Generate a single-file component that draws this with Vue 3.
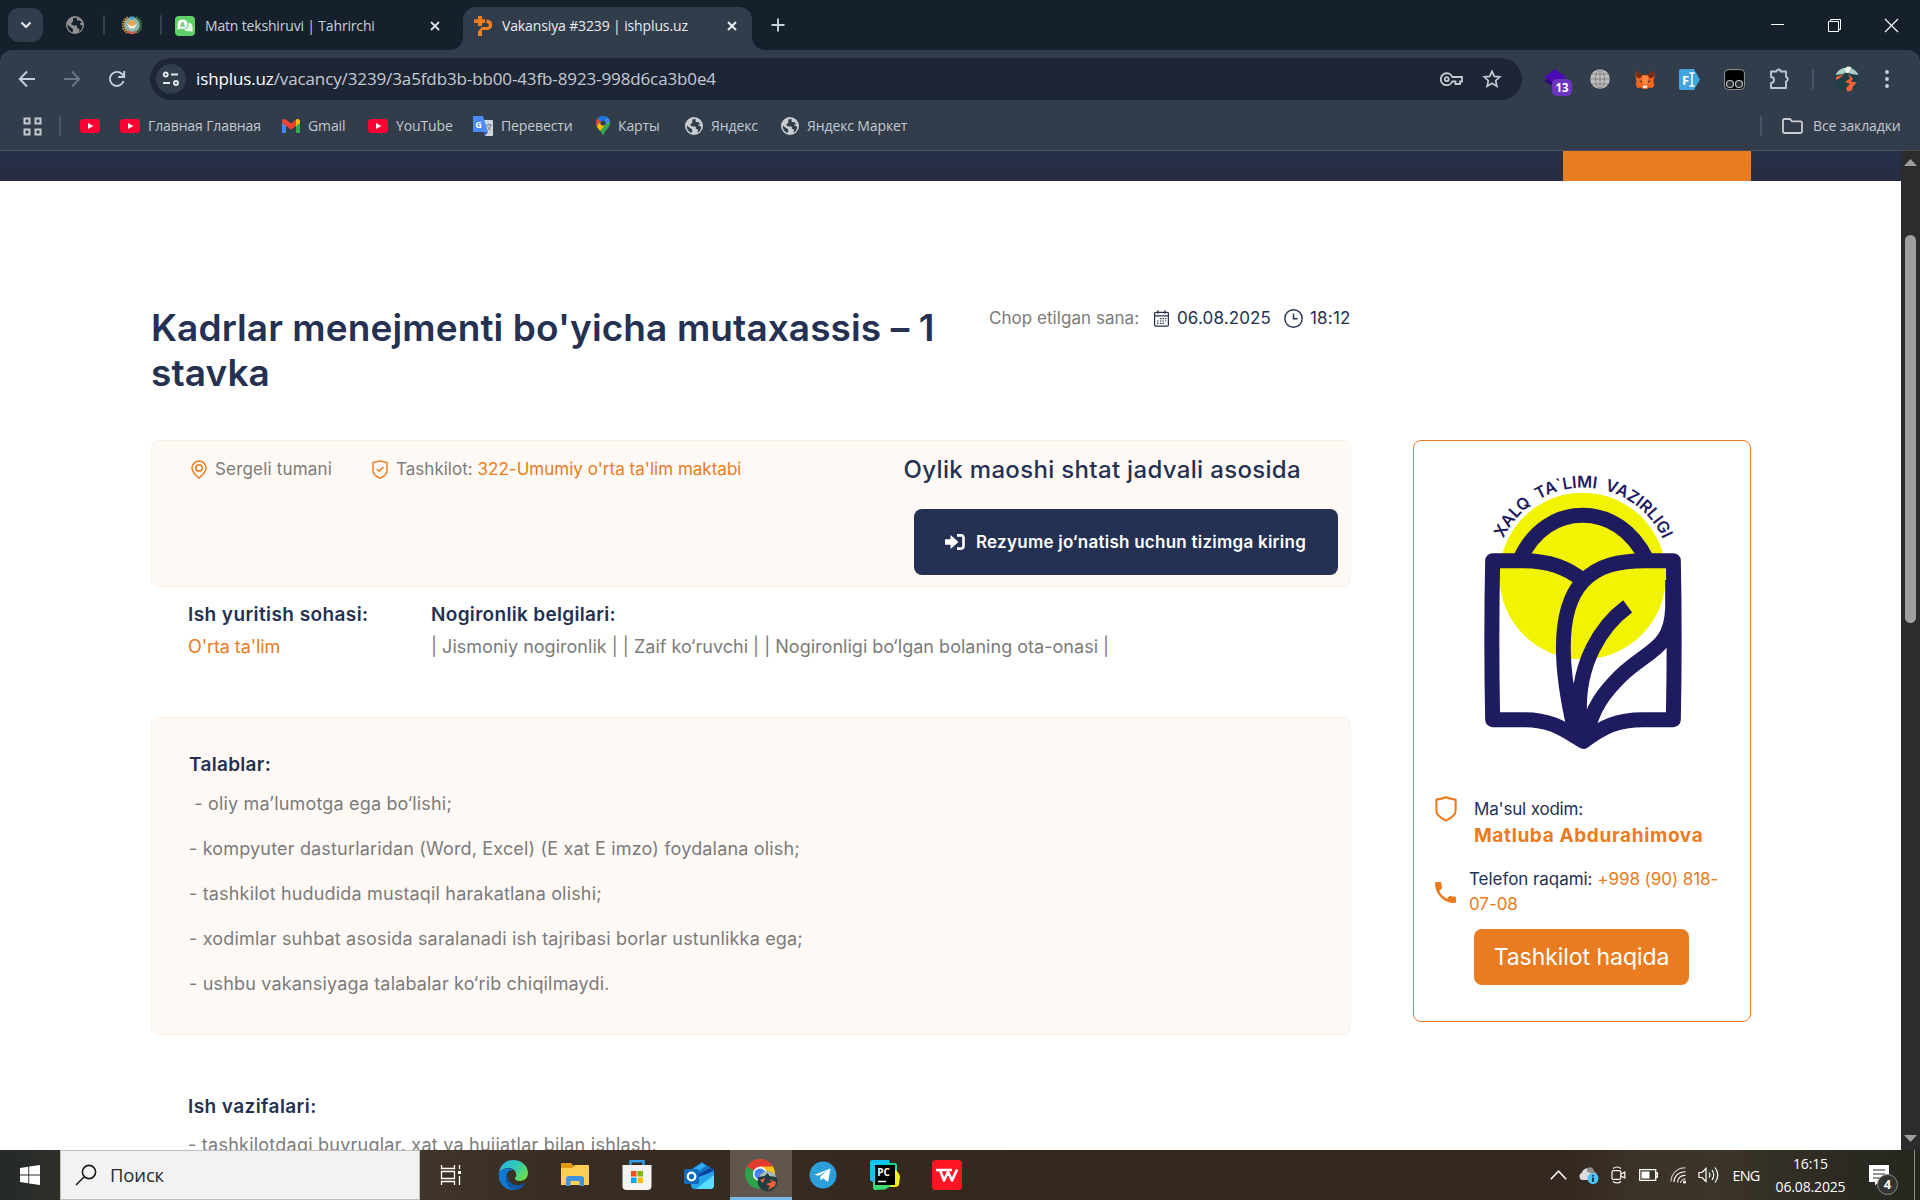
<script setup>
const bookmarks = [
  { icon: 'yt', text: '', w: 40 },
  { icon: 'yt', text: 'Главная Главная', w: 162 },
  { icon: 'gmail', text: 'Gmail', w: 86 },
  { icon: 'yt', text: 'YouTube', w: 105 },
  { icon: 'translate', text: 'Перевести', w: 123 },
  { icon: 'maps', text: 'Карты', w: 89 },
  { icon: 'globe', text: 'Яндекс', w: 96 },
  { icon: 'globe', text: 'Яндекс Маркет', w: 150 }
]
const requirements = [
  '\u00a0- oliy ma’lumotga ega bo‘lishi;',
  '- kompyuter dasturlaridan (Word, Excel) (E xat E imzo) foydalana olish;',
  '- tashkilot hududida mustaqil harakatlana olishi;',
  '- xodimlar suhbat asosida saralanadi ish tajribasi borlar ustunlikka ega;',
  '- ushbu vakansiyaga talabalar ko‘rib chiqilmaydi.'
]
</script>

<template>
  <div class="screen">
    <!-- tab strip -->
    <div class="tabs">
      <div class="tab-search">
        <svg width="12" height="8" viewBox="0 0 12 8"><path d="M1.500 1.500 6 6l4.500-4.500" fill="none" stroke="#e3e6ea" stroke-width="2.200" /></svg>
      </div>
      <svg class="pinned" width="20" height="20" viewBox="0 0 20 20">
        <circle cx="10" cy="10" r="9" fill="#8f8f8f" />
        <path d="M11.500 2.500 8 3.500v3l-2 2.500 2.500 1.500h3.500V13l2.500 1L14 17c2-1.500 3.500-4 3.500-6.500L15 9.500V8h2L15 5.500h-3zM2.500 9.500C2.300 13 4 15.500 6.500 17l1.500-.5V14l-2-1.500z" fill="#15202c" />
      </svg>
      <i class="sep"></i>
      <svg class="emblem" width="20" height="20" viewBox="0 0 20 20">
        <circle cx="10" cy="10" r="8" fill="#8fb9ae" />
        <path d="M6 2.500A8.500 8.500 0 0 0 5.500 17.500" fill="none" stroke="#c08e3c" stroke-width="3" stroke-dasharray="1.600 .8" />
        <path d="M14 2.500A8.500 8.500 0 0 1 14.500 17.500" fill="none" stroke="#3f7d46" stroke-width="3" stroke-dasharray="1.600 .8" />
        <circle cx="10" cy="8.500" r="3.500" fill="#e9a850" /><path d="M5 8.500q5 5 10 0l-2.500 5h-5z" fill="#f2eee4" />
        <path d="M5.500 16.500q4.500 3 9 0" stroke="#d05b4f" stroke-width="2.400" fill="none" /><path d="M8 1.500h4v3H8z" fill="#4aa6d8" />
      </svg>
      <i class="sep"></i>
      <div class="tab tab-idle">
        <svg width="20" height="20" viewBox="0 0 20 20">
          <rect width="20" height="20" rx="4" fill="#5fd068" />
          <path d="M7.500 3.500c3 0 5 2 5 4.700s-2 4.700-5 4.700c-.8 0-1.500 0-2-.3L2.600 14V8.200c0-2.700 2-4.700 4.900-4.700z" fill="#fff" />
          <path d="M13.500 6.500c2.300.4 4 2 4 4.300V16l-2.800-1c-3 .6-5.200-.3-6-1.700 3.500 0 5.400-3 4.800-6.800z" fill="#e8fbe9" />
          <text x="7.500" y="10.800" font-size="7" font-weight="700" fill="#4cc257" text-anchor="middle">A</text>
        </svg>
        <span class="tab-title t1">Matn tekshiruvi | Tahrirchi</span>
        <svg class="x" width="10" height="10" viewBox="0 0 10 10"><path d="m1 1 8 8M9 1 1 9" stroke="#d3dce8" stroke-width="1.900" /></svg>
      </div>
      <div class="tab tab-active">
        <svg width="18" height="20" viewBox="0 0 18 20">
          <path d="M4 0h4v3.300h3V7H8v3H4V7H0V3.300h4z" fill="#ef7d1b" />
          <path d="M12.500 3.500H13a5 5 0 0 1 0 10.500H8v6H4v-4.500L8 11h5a1.800 1.800 0 0 0 0-3.700h-.5z" fill="#ee7f22" />
        </svg>
        <span class="tab-title t2">Vakansiya #3239 | ishplus.uz</span>
        <svg class="x" width="10" height="10" viewBox="0 0 10 10"><path d="m1 1 8 8M9 1 1 9" stroke="#eef1f5" stroke-width="1.900" /></svg>
      </div>
      <svg class="plus" width="14" height="14" viewBox="0 0 14 14"><path d="M7 .5v13M.5 7h13" stroke="#c8d2de" stroke-width="1.900" /></svg>
      <div class="wincontrols">
        <svg width="15" height="15" viewBox="0 0 15 15"><path d="M1 6.500h13" stroke="#fff" /></svg>
        <svg width="15" height="15" viewBox="0 0 15 15"><path d="M1.500 3.500h10v10h-10zM3.500 3.500v-2h10v10h-2" fill="none" stroke="#fff" /></svg>
        <svg width="15" height="15" viewBox="0 0 15 15"><path d="m1 1 13 13M14 1 1 14" stroke="#fff" stroke-width="1.100" /></svg>
      </div>
    </div>

    <!-- toolbar and bookmarks -->
    <div class="browser">
      <div class="toolbar">
        <svg width="18" height="18" viewBox="0 0 18 18"><path d="M17 9H2M9 1.500 1.700 9 9 16.500" fill="none" stroke="#c3cfdf" stroke-width="1.900" /></svg>
        <svg class="fwd" width="18" height="18" viewBox="0 0 18 18"><path d="M1 9h15M9 1.500 16.300 9 9 16.500" fill="none" stroke="#6d7784" stroke-width="1.900" /></svg>
        <svg class="reload" width="18" height="18" viewBox="0 0 18 18"><path d="M15.600 11A7 7 0 1 1 14 4l1.800 2" fill="none" stroke="#c3cfdf" stroke-width="1.900" /><path d="M16.200 1v6h-6" fill="none" stroke="#c3cfdf" stroke-width="1.900" /></svg>
        <div class="omnibox">
          <div class="siteinfo">
            <svg width="18" height="16" viewBox="0 0 18 16"><g fill="none" stroke="#e4e8ed" stroke-width="1.900"><circle cx="3.700" cy="3.500" r="2" /><path d="M9 3.500h7M1 12h7" /><circle cx="14" cy="12" r="2" /></g></svg>
          </div>
          <span class="url"><b>ishplus.uz</b>/vacancy/3239/3a5fdb3b-bb00-43fb-8923-998d6ca3b0e4</span>
          <svg class="key" width="23" height="14" viewBox="0 0 23 14"><path d="M12.300 5A6 6 0 1 0 12.300 9.500H15.500V12H20V9.500h2V5z" fill="none" stroke="#c4cad3" stroke-width="1.800" /><circle cx="6.700" cy="7.200" r="2" fill="none" stroke="#c4cad3" stroke-width="1.800" /></svg>
          <svg class="star" width="20" height="20" viewBox="0 0 20 20"><path d="m10 2.300 2.300 5.100 5.500.6-4.100 3.700 1.200 5.500-4.900-2.900-4.900 2.900 1.200-5.500L2.200 8l5.500-.6z" fill="none" stroke="#c4cad3" stroke-width="1.700" /></svg>
        </div>
        <div class="exts">
          <div class="ext-purple">
            <svg width="22" height="20" viewBox="0 0 22 20"><path d="M0 12 11 5l11 7-11 7z" fill="#2a0b77" /><path d="M0 8 11 0l11 8-11 7z" fill="#4b0ab4" /></svg>
            <span class="badge">13</span>
          </div>
          <svg width="20" height="20" viewBox="0 0 20 20"><circle cx="10" cy="10" r="9.800" fill="#bdbdbd" /><g fill="none" stroke="#858585"><ellipse cx="10" cy="10" rx="4.500" ry="9.500" /><path d="M10 0v20M0 10h20M2 5h16M2 15h16" /></g></svg>
          <svg width="20" height="19" viewBox="0 0 20 19"><path d="M1 .5 7 5h6l6-4.500.5 6-1 4.500.8 4-1.800 3-3.500-.5L12 19H8l-2-1.500-3.500.5-1.800-3 .8-4L.5 6.500z" fill="#f0651f" /><path d="M1 .5 7.500 5 5 8.500 1.200 7zM19 .5 12.500 5 15 8.500 18.800 7z" fill="#7a2b12" /><path d="M7.500 6h5l.8 6.500L10 15l-3.300-2.500z" fill="#ff8c42" /><path d="m4.500 10.500 3 .8-1 1.200zM15.500 10.500l-3 .8 1 1.200z" fill="#33130f" /><path d="M7.500 15.500h5L12 18H8z" fill="#f7e3d6" /></svg>
          <svg width="21" height="21" viewBox="0 0 21 21"><path d="M2 0h13l6 10.500-6 10.500H2a2 2 0 0 1-2-2V2a2 2 0 0 1 2-2z" fill="#41a5e0" /><text x="6.500" y="15.500" font-size="13" font-weight="700" fill="#fff" text-anchor="middle">F</text><path d="M10.500 4h5M13 4v13M10.500 17h5" stroke="#fff" stroke-width="1.500" /></svg>
          <svg width="21" height="21" viewBox="0 0 21 21"><rect x=".6" y=".6" width="19.800" height="19.800" rx="3.500" fill="#000" stroke="#9a9a9a" /><g fill="#2b3036" stroke="#b9c0c8" stroke-width="1.200"><circle cx="6" cy="15" r="3.500" /><circle cx="15" cy="15" r="3.500" /></g></svg>
          <svg width="22" height="22" viewBox="0 0 22 22"><path d="M2 3.500h5.500a2 2 0 0 1 4 0H17V9a2.300 2.300 0 0 1 0 4.500V20H2v-5a2.800 2.800 0 0 0 0-6z" fill="none" stroke="#b9c8dc" stroke-width="1.900" stroke-linejoin="round" /></svg>
          <i class="sep2"></i>
          <svg width="26" height="26" viewBox="0 0 26 26"><circle cx="13" cy="13" r="12.500" fill="#1f3e46" /><path d="M1.500 9A12.500 12.500 0 0 1 24.500 9L17 8l-4-2-4 2z" fill="#a9cdc4" /><path d="m12.500 7-2-4 3-2.500 4 .5-3 6z" fill="#f1f3ea" /><path d="m2 11 8-3-4 4-4 2zM14 8l2 4.500-5 3.500 5 2-4 4 1 3.500 5-1 1-4 4-4-6-1 2-3z" fill="#f0603a" /></svg>
          <svg width="6" height="20" viewBox="0 0 6 20"><g fill="#c9d3e0"><circle cx="3" cy="3" r="1.900" /><circle cx="3" cy="10" r="1.900" /><circle cx="3" cy="17" r="1.900" /></g></svg>
        </div>
      </div>
      <div class="bookmarks">
        <svg width="19" height="19" viewBox="0 0 19 19"><path d="M1.500 1.500h5v5h-5zM12.500 1.500h5v5h-5zM1.500 12.500h5v5h-5zM12.500 12.500h5v5h-5z" fill="none" stroke="#c6c9cd" stroke-width="2" /></svg>
        <i class="sep bsep"></i>
        <div v-for="(b, i) in bookmarks" :key="i" class="bm" :style="{ width: b.w + 'px' }">
          <svg v-if="b.icon === 'yt'" width="20" height="14" viewBox="0 0 20 14"><rect width="20" height="14" rx="3.500" fill="#ff0033" /><path d="m8 4 5.300 3L8 10z" fill="#fff" /></svg>
          <svg v-else-if="b.icon === 'gmail'" width="18" height="14" viewBox="0 0 18 14"><path d="M0 2v12h4V5z" fill="#4285f4" /><path d="M18 2v12h-4V5z" fill="#34a853" /><path d="M0 2.200V4l4 3 5 3.600L14 7V.600L9 4.600 4 .600C2.400-.7 0 .2 0 2.200z" fill="#ea4335" /><path d="M14 .600V7l4-3V2.200C18 .2 15.600-.7 14 .600z" fill="#fbbc04" /></svg>
          <svg v-else-if="b.icon === 'translate'" width="20" height="20" viewBox="0 0 20 20"><path d="M8 4h11a1 1 0 0 1 1 1v14a1 1 0 0 1-1 1h-7z" fill="#d3d6da" /><path d="M1 0h9l5 16H1a1 1 0 0 1-1-1V1a1 1 0 0 1 1-1z" fill="#4c8bf5" /><path d="m10 16 2 4 3-4z" fill="#3a5bb5" /><path d="M13 9h6M16 7.500V9M18 9c-.5 2.500-2 4-3.500 5M14.500 10.500c.7 1.500 2 3 3.500 3.800" stroke="#6a7f96" fill="none" /><text x="5.500" y="11.500" font-size="9" font-weight="700" fill="#fff" text-anchor="middle">G</text></svg>
          <svg v-else-if="b.icon === 'maps'" width="14" height="20" viewBox="0 0 14 20"><path d="M7 0a7 7 0 0 1 7 7c0 5-5.500 7-7 13C5.500 14 0 12 0 7a7 7 0 0 1 7-7z" fill="#34a853" /><path d="M1.500 2.800A7 7 0 0 1 11.500 1.600L4.500 9z" fill="#1a73e8" /><path d="M1.600 2.600 5 5.500.8 10.300C-.5 8 0 4.300 1.600 2.600z" fill="#ea4335" /><path d="M.8 10.300 5 5.500l4 3.500-5 6C2.500 13 1.500 12 .8 10.300z" fill="#fbbc04" /><path d="M11.500 1.600C13 2.800 13.600 4 13.900 5.500L9 9 9 4.500z" fill="#4285f4" /><circle cx="7" cy="7" r="2.600" fill="#323d4c" /></svg>
          <svg v-else width="18" height="18" viewBox="0 0 20 20"><circle cx="10" cy="10" r="10" fill="#c9ccd1" /><path d="M11.500 2 8 3v3.500L5.500 9l3 1.500H12V13l2.500 1L14 17.500c2.500-1.500 4-4 4-7L15 9.500V8h2L15 5.500h-3zM2 9.500C1.800 13.500 3.500 16 6.500 17.500L8 17v-3l-2-1.500z" fill="#323d4c" /></svg>
          <span v-if="b.text">{{ b.text }}</span>
        </div>
        <div class="allbm">
          <i class="sep bsep2"></i>
          <svg width="21" height="16" viewBox="0 0 21 16"><path d="M1 2.500Q1 1 2.500 1H8l2 2.300h8.500Q20 3.300 20 4.800V13.500Q20 15 18.500 15h-16Q1 15 1 13.500z" fill="none" stroke="#c9ccd1" stroke-width="1.800" /></svg>
          <span>Все закладки</span>
        </div>
      </div>
    </div>

    <!-- page -->
    <div class="viewport">
      <div class="page">
        <div class="site-header"><div class="site-cta"></div></div>
        <main>
          <header class="head">
            <h1>Kadrlar menejmenti bo'yicha mutaxassis – 1<br />stavka</h1>
            <div class="published">
              <span class="pub-label">Chop etilgan sana:</span>
              <svg width="15" height="17" viewBox="0 0 15 17"><g fill="none" stroke="#243152" stroke-width="1.200"><rect x=".6" y="2.300" width="13.800" height="13.800" rx="1" /><path d="M.6 5.800h13.800M4 .3v3.400M11 .3v3.400" /></g><path d="M6 8.700h1.500M8.500 8.700H10M11 8.700h1.300M3 11h1.500M6 11h1.500M8.500 11H10M11 11h1.300M3 13.300h1.500M6 13.300h1.500M8.500 13.300H10" stroke="#243152" stroke-width="1.200" /></svg>
              <span class="pub-date">06.08.2025</span>
              <svg width="19" height="19" viewBox="0 0 19 19"><circle cx="9.500" cy="9.500" r="8.700" fill="none" stroke="#243152" stroke-width="1.400" /><path d="M9.500 4.500v5.300h4" fill="none" stroke="#243152" stroke-width="1.400" /></svg>
              <span class="pub-time">18:12</span>
            </div>
          </header>
          <div class="columns">
            <div class="content">
              <section class="card summary">
                <div class="meta">
                  <svg width="16" height="19" viewBox="0 0 16 19"><path d="M8 .9a7 7 0 0 1 7 7c0 4.300-4 7.500-7 10.200C5 15.400 1 12.200 1 7.900a7 7 0 0 1 7-7z" fill="none" stroke="#e97c20" stroke-width="1.500" /><circle cx="8" cy="7.900" r="3.200" fill="none" stroke="#e97c20" stroke-width="1.500" /></svg>
                  <span class="district">Sergeli tumani</span>
                  <svg width="16" height="19" viewBox="0 0 16 19"><path d="M8 .9c2.500 1 4.600 1.400 7 1.700v8.300c0 3.400-3.500 5.700-7 7.200-3.500-1.500-7-3.800-7-7.200V2.600C3.400 2.300 5.500 1.900 8 .9z" fill="none" stroke="#e97c20" stroke-width="1.500" stroke-linejoin="round" /><path d="m4.800 9 2.300 2.300L11.500 7" fill="none" stroke="#e97c20" stroke-width="1.500" /></svg>
                  <span class="org">Tashkilot: <a>322-Umumiy o'rta ta'lim maktabi</a></span>
                </div>
                <div class="pay">
                  <div class="salary">Oylik maoshi shtat jadvali asosida</div>
                  <button class="apply">
                    <svg width="20" height="16" viewBox="0 0 20 16"><path d="M0 5.300h5.500V1L13.500 8l-8 7v-4.300H0z" fill="#fff" /><path d="M12 1.400h4a2.500 2.500 0 0 1 2.500 2.500v8.200a2.500 2.500 0 0 1-2.500 2.500h-4" fill="none" stroke="#fff" stroke-width="2.600" /></svg>
                    <span>Rezyume jo‘natish uchun tizimga kiring</span>
                  </button>
                </div>
              </section>
              <div class="facts">
                <div class="fact field"><h2>Ish yuritish sohasi:</h2><p class="orange">O'rta ta'lim</p></div>
                <div class="fact"><h2 class="tight">Nogironlik belgilari:</h2><p>| Jismoniy nogironlik | | Zaif ko‘ruvchi | | Nogironligi bo‘lgan bolaning ota-onasi |</p></div>
              </div>
              <section class="card reqs">
                <h2>Talablar:</h2>
                <p v-for="r in requirements" :key="r">{{ r }}</p>
              </section>
              <section class="duties">
                <h2>Ish vazifalari:</h2>
                <p>- tashkilotdagi buyruqlar, xat va hujjatlar bilan ishlash;</p>
              </section>
            </div>
            <aside class="org-card">
              <svg class="logo" width="336" height="319" viewBox="72 63 1008 957">
                <circle cx="578" cy="468" r="250" fill="#f1f300" />
                <defs><path id="logoArc" d="M340 356A263 263 0 0 1 818 356" /></defs>
                <text font-size="49" font-weight="600" word-spacing="12" fill="#1f1b60"><textPath href="#logoArc" startOffset="0" textLength="602">XALQ TA`LIMI VAZIRLIGI</textPath></text>
                <g fill="none" stroke="#1f1b60" stroke-width="45" stroke-linejoin="round">
                  <path d="M578 481C530 440 475 422 400 422H308Q303 660 308 899H405C490 899 530 935 580 964C640 920 680 899 760 899H850Q855 660 850 422H765C690 422 625 435 578 485C500 570 510 740 553 925" />
                  <path d="M390 418C430 330 500 286 578 286S726 330 770 418" />
                  <path d="M713 559C630 620 566 730 568 870" />
                  <path d="M848 480V560C846 690 770 690 690 770C640 820 610 860 590 940" />
                </g>
                <path d="M546 780 585 860 620 905 580 980 530 915z" fill="#1f1b60" />
              </svg>
              <div class="person">
                <svg width="22" height="26" viewBox="0 0 22 26"><path d="M11 1.300c3 1.300 6 1.900 9.600 2.300v11.200c0 4.800-4.800 7.600-9.600 9.800-4.800-2.200-9.600-5-9.600-9.800V3.600C5 3.200 8 2.600 11 1.300z" fill="none" stroke="#e97c20" stroke-width="2.100" stroke-linejoin="round" /></svg>
                <div><div class="role">Ma'sul xodim:</div><div class="name">Matluba Abdurahimova</div></div>
              </div>
              <div class="phone">
                <svg width="21" height="21" viewBox="0 0 18 18"><path d="M17 12.500c-1.200 0-2.500-.2-3.600-.6-.3-.1-.7 0-1 .2l-2.200 2.200a15 15 0 0 1-6.600-6.600l2.200-2.200c.3-.3.400-.7.200-1A11 11 0 0 1 5.500 1c0-.6-.4-1-1-1H1C.4 0 0 .4 0 1c0 9.400 7.600 17 17 17 .6 0 1-.4 1-1v-3.500c0-.6-.4-1-1-1z" fill="#e97c20" /></svg>
                <div class="phone-text"><span>Telefon raqami:</span> <a>+998 (90) 818-<br />07-08</a></div>
              </div>
              <button class="about">Tashkilot haqida</button>
            </aside>
          </div>
        </main>
      </div>
      <div class="scrollbar">
        <svg width="13" height="7" viewBox="0 0 13 7"><path d="M0 7 6.500 0 13 7z" fill="#9f9f9f" /></svg>
        <div class="thumb"></div>
        <svg class="down" width="13" height="7" viewBox="0 0 13 7"><path d="M0 0 6.500 7 13 0z" fill="#9f9f9f" /></svg>
      </div>
    </div>

    <!-- taskbar -->
    <div class="taskbar">
      <div class="start"><svg width="20" height="20" viewBox="0 0 20 20"><path d="M0 3 8.300 1.700v7.800H0zM9.200 1.500 20 0v9.500H9.200zM0 10.500h8.300v7.800L0 17zM9.200 10.500H20V20L9.200 18.500z" fill="#fff" /></svg></div>
      <div class="search">
        <svg width="22" height="22" viewBox="0 0 22 22"><circle cx="14" cy="8" r="6.600" fill="none" stroke="#1b1b1b" stroke-width="1.600" /><path d="M9.300 12.800 1 21" stroke="#1b1b1b" stroke-width="1.600" /></svg>
        <span>Поиск</span>
      </div>
      <div class="app"><svg width="22" height="22" viewBox="0 0 22 22"><g fill="none" stroke="#fff" stroke-width="1.300"><path d="M1.500 1v3.500h13V1M1.500 21v-3.500h13V21M1.500 7.500h13v7h-13zM19.500 1v4M19.500 12v9" /></g><path d="M18 7h3v3h-3z" fill="#fff" /></svg></div>
      <div class="app">
        <svg width="30" height="30" viewBox="0 0 30 30">
          <defs><linearGradient id="eg" x1="0" y1="0" x2="1" y2=".6"><stop offset="0" stop-color="#27b3e8" /><stop offset=".6" stop-color="#35c9b4" /><stop offset="1" stop-color="#68dc4c" /></linearGradient></defs>
          <path d="M1 13C2 5 8 0 15 0c9 0 15 6 15 13 0 5-4 8-8 8-3.500 0-5.500-1.500-5-3 2-2 1.500-6-1-8C12 6.500 4 8 1 13z" fill="url(#eg)" />
          <path d="M1 13c3-5 10-6 14-3-4-.5-7 3-7 8 0 6 4 11 10 12h-3C6 30-.5 22 1 13z" fill="#1378cf" />
          <path d="M10 14c-1 7 4 12 11 11 3 0 5-1.500 6.500-2.500-2 4-6 7.500-11 7.500C9 28 6 20 10 14z" fill="#0c59a4" />
        </svg>
      </div>
      <div class="app">
        <svg width="28" height="24" viewBox="0 0 28 24"><path d="M1 0h9l3 3-1 3H0V1a1 1 0 0 1 1-1z" fill="#e09a10" /><path d="M0 5h11l3-3h13a1 1 0 0 1 1 1v19H0z" fill="#fecf54" /><path d="M5 23v-7a3 3 0 0 1 3-3h12a3 3 0 0 1 3 3v7h-4.500v-5h-9v5z" fill="#3f93dc" /></svg>
      </div>
      <div class="app">
        <svg width="30" height="30" viewBox="0 0 30 30"><path d="M8.500 6V1.200h13V6" fill="none" stroke="#2d9fe8" stroke-width="2.400" /><path d="M.5 5h29v21a4 4 0 0 1-4 4h-21a4 4 0 0 1-4-4z" fill="#f4f4f4" /><path d="M9 11h5.500v5.500H9z" fill="#f25022" /><path d="M15.500 11H21v5.500h-5.500z" fill="#7fba00" /><path d="M9 17.500h5.500V23H9z" fill="#00a4ef" /><path d="M15.500 17.500H21V23h-5.500z" fill="#ffb900" /></svg>
      </div>
      <div class="app">
        <svg width="30" height="27" viewBox="0 0 30 27"><path d="M6 8 18 0l12 8v6L6 20z" fill="#1474cc" /><path d="m9 7 9-6 4 3-10 7z" fill="#32aef0" /><path d="M12 14 26 6l4 3-14 9z" fill="#0c3f9a" /><path d="M7 18 30 9v14a4 4 0 0 1-4 4H11a4 4 0 0 1-4-4z" fill="#28a5ea" /><path d="M12 27 30 13v10a4 4 0 0 1-4 4z" fill="#5adcfb" /><rect y="7" width="15" height="15" rx="1.500" fill="#0f6cbd" /><circle cx="7.500" cy="14.500" r="3.800" fill="none" stroke="#fff" stroke-width="2.200" /></svg>
      </div>
      <div class="app app-active">
        <svg width="33" height="33" viewBox="0 0 33 33"><circle cx="15" cy="15" r="15" fill="#2da24b" /><path d="M15 15 2 7.500A15 15 0 0 1 28 7.500z" fill="#e33b2e" /><path d="M15 7.500h13A15 15 0 0 1 15 30l6.500-11z" fill="#fbc116" /><circle cx="15" cy="15" r="7.200" fill="#fff" /><circle cx="15" cy="15" r="5.600" fill="#4285f4" /><circle cx="22.500" cy="22.500" r="10" fill="#253c43" /><path d="M13.500 18a10 10 0 0 1 18 0l-7-1-2-3-3 3z" fill="#a5bcb8" /><path d="m15 21 5-2-2 5zM24 20l3 3-6 2 4 2-2 4 7-4 1-4z" fill="#ef6238" /></svg>
      </div>
      <div class="app"><svg width="28" height="28" viewBox="0 0 28 28"><circle cx="14" cy="14" r="13.500" fill="#2a9fd9" /><path d="M5.500 13.800 21.500 7.500 19 21l-5-3.700-2.500 2.300v-4.300l7-5.800-8.800 5.300z" fill="#fff" /></svg></div>
      <div class="app">
        <svg width="30" height="30" viewBox="0 0 30 30"><path d="M0 2Q0 0 2 0h17l3 8-12 20L0 20z" fill="#0fc3f2" /><path d="M18 3h7q2 0 2 2v8L12 20z" fill="#15d98e" /><path d="M25 9q5 5 5 8l-1 8q-1 2-4 2H15z" fill="#f3ee18" /><path d="m3 23 10-6 8 9-6 3.500L5 30q-2 0-2-3z" fill="#3bdc74" /><path d="M5 5h20v20H5z" fill="#000" /><text x="13.500" y="15.500" font-size="10" font-weight="700" fill="#fff" text-anchor="middle">PC</text><path d="M8 21.500h8" stroke="#fff" stroke-width="1.500" /></svg>
      </div>
      <div class="app"><svg width="30" height="30" viewBox="0 0 30 30"><rect width="30" height="30" rx="3.500" fill="#fe1423" /><path d="M4 10h4l4 10.500L16 12l4 8.500L25 9.500M8.500 10H20" fill="none" stroke="#fff" stroke-width="2.600" stroke-linejoin="round" /></svg></div>
      <div class="tray">
        <div class="w30"><svg width="17" height="10" viewBox="0 0 17 10"><path d="m.8 9.200 7.700-8 7.700 8" fill="none" stroke="#fff" stroke-width="1.500" /></svg></div>
        <div class="w30"><svg width="21" height="17" viewBox="0 0 21 17"><path d="M4 13a4 4 0 0 1 0-7.500C5 1 12-.5 14 4c3 0 5 2 4 6l-3 3z" fill="#dcdcdc" /><path d="M9 1c4-2 7 0 7 4 2 0 3 1 3 3L9 5z" fill="#8e8e8e" /><circle cx="15" cy="11.500" r="5.500" fill="#4cc2f7" /><path d="M15 8v1.500M15 10.500V15" stroke="#0b3350" stroke-width="1.800" /></svg></div>
        <div class="w31"><svg width="15" height="18" viewBox="0 0 15 18"><g fill="none" stroke="#fff" stroke-width="1.200"><rect x="1" y="4.600" width="8.800" height="8.800" rx="1.500" /><path d="m10 8 3.800-2v6L10 10M2 2.500Q6-.5 10 2.500M2 15.500q4 3 8 0" /></g></svg></div>
        <div class="w29"><svg width="19" height="12" viewBox="0 0 19 12"><path d="M.7.700h16v10.600h-16zM17 4h1.400v4H17" fill="none" stroke="#fff" stroke-width="1.300" /><path d="M2.500 2.500h8v7h-8z" fill="#fff" /></svg></div>
        <div class="w31"><svg width="17" height="17" viewBox="0 0 17 17"><g fill="none" stroke="#fff" stroke-width="1.200"><path d="M1 14.500A13.500 13.500 0 0 1 15.500 1" opacity=".7" /><path d="M4 15A10.500 10.500 0 0 1 15.500 4.800M7.500 15.500A7 7 0 0 1 15.500 8.500" /></g><path d="M10.500 16a4.500 4.500 0 0 1 5-4" fill="none" stroke="#fff" /><circle cx="14.500" cy="15" r="1.600" fill="#fff" /></svg></div>
        <div class="w29"><svg width="21" height="18" viewBox="0 0 21 18"><g fill="none" stroke="#fff" stroke-width="1.200"><path d="M1 6.500h3L8 2.500v13L4 11.500H1z" /><path d="M11 6.500q2 2.500 0 5M14 4q3.500 5 0 10M17 1.500q5.500 7.500 0 15" /></g></svg></div>
        <div class="lang">ENG</div>
        <div class="clock"><div>16:15</div><div>06.08.2025</div></div>
        <div class="notif">
          <svg width="21" height="21" viewBox="0 0 21 21"><path d="M0 0h20v17H9.500L6 20.500V17H0z" fill="#fff" /><path d="M4 5h12M4 9h12M4 13h8" stroke="#2c2a25" stroke-width="1.200" /></svg>
          <span class="count">4</span>
        </div>
        <i class="peek"></i>
      </div>
    </div>
  </div>
</template>

<style>
body { margin: 0; background: #fff; overflow: hidden; }
</style>

<style scoped>
.screen { width: 1920px; height: 1200px; display: flex; flex-direction: column; overflow: hidden; background: #15202c; font-family: "Open Sans", "Noto Sans", sans-serif; }
svg { display: block; flex: none; }
span, a { white-space: nowrap; }

.tabs { height: 50px; flex: none; display: flex; align-items: center; box-sizing: border-box; padding-left: 8px; }
.tab-search { width: 35px; height: 34px; border-radius: 11px; background: #323d4c; display: flex; align-items: center; justify-content: center; }
.pinned { margin-left: 22px; }
.sep { width: 2px; height: 20px; background: #34404f; margin: 0 17px 0 18px; border-radius: 1px; flex: none; }
.emblem + .sep { margin-right: 13px; }
.tab { display: flex; align-items: center; font-size: 14px; line-height: 20px; }
.tab-idle { width: 288px; color: #c6d0dd; padding-top: 1px; }
.tab-title { margin-left: 10px; width: 225px; letter-spacing: -.17px; }
.tab-active { position: relative; align-self: flex-end; box-sizing: border-box; width: 289px; height: 43px; padding: 0 0 6px 11px; background: #323d4c; border-radius: 13px 13px 0 0; color: #e8ebef; }
.tab-active .tab-title { width: 225px; letter-spacing: -.13px; }
.tab-active::before, .tab-active::after { content: ""; position: absolute; bottom: 0; width: 13px; height: 13px; }
.tab-active::before { left: -13px; background: radial-gradient(circle at 0 0, #15202c 12.500px, #323d4c 13.500px); }
.tab-active::after { right: -13px; background: radial-gradient(circle at 100% 0, #15202c 12.500px, #323d4c 13.500px); }
.plus { margin-left: 19px; }
.wincontrols { margin-left: auto; margin-right: 21px; display: flex; gap: 42px; }

.browser { height: 101px; flex: none; background: #323d4c; border-radius: 12px 12px 0 0; box-sizing: border-box; border-bottom: 1px solid #4b4e52; }
.toolbar { height: 58px; display: flex; align-items: center; padding-left: 18px; }
.fwd { margin-left: 27px; }
.reload { margin-left: 27px; }
.omnibox { margin-left: 24px; width: 1372px; height: 42px; border-radius: 21px; background: #1e2636; display: flex; align-items: center; }
.siteinfo { margin-left: 6px; width: 30px; height: 30px; border-radius: 15px; background: #323d4c; display: flex; align-items: center; justify-content: center; }
.url { margin-left: 10px; font-size: 17px; line-height: 24px; letter-spacing: -.12px; color: #c4cad3; }
.url b { font-weight: 400; color: #fff; }
.key { margin-left: auto; margin-right: 19px; }
.star { margin-right: 20px; }
.exts { display: flex; align-items: center; margin-left: 22px; gap: 24.300px; }
.ext-purple { position: relative; width: 22px; height: 20px; }
.badge { position: absolute; left: 8px; top: 10px; width: 20px; height: 17px; border-radius: 5px; background: #6b35bd; color: #fff; font-size: 11.500px; font-weight: 700; line-height: 18px; text-align: center; }
.sep2 { width: 2px; height: 20px; background: #4a5666; margin: 0 -4px 0 -4px; }
.bookmarks { height: 42px; box-sizing: border-box; display: flex; align-items: center; padding: 0 0 6px 23px; color: #c5c9ce; font-size: 14px; line-height: 20px; letter-spacing: -.12px; }
.bsep { margin: 0 19px 0 17px; background: #4a5564; }
.bm { display: flex; align-items: center; gap: 8px; flex: none; }
.allbm { margin-left: auto; width: 160px; display: flex; align-items: center; }
.bsep2 { margin: 0 20px 0 0; background: #4a5564; }
.allbm span { margin-left: 10px; }

.viewport { height: 999px; flex: none; display: flex; background: #fff; overflow: hidden; font-family: Inter, "Noto Sans", sans-serif; }
.page { width: 1901px; height: 999px; overflow: hidden; }
.site-header { height: 30px; background: linear-gradient(#272f4c, #262d40); display: flex; justify-content: flex-end; padding-right: 150px; }
.site-cta { width: 188px; background: #e97b20; }
main { padding: 124px 0 0 151px; color: #7b7b7b; }
.head { width: 1200px; height: 135px; display: flex; justify-content: space-between; }
h1 { margin: 0; font-size: 37px; line-height: 45px; font-weight: 570; letter-spacing: .1px; color: #243152; white-space: nowrap; }
.published { display: flex; align-items: center; height: 26px; font-size: 17px; line-height: 26px; color: #243152; }
.pub-label { color: #7b7b7b; width: 165px; letter-spacing: .04px; }
.pub-date { width: 107px; margin-left: 8px; letter-spacing: .13px; }
.pub-time { width: 41px; margin-left: 7px; letter-spacing: .2px; }
.columns { display: flex; gap: 62px; align-items: flex-start; }
.content { width: 1200px; flex: none; }
.card { box-sizing: border-box; width: 1200px; background: #fff9f6; border: 1px solid #fdf0e5; border-radius: 8px; }
.summary { height: 147px; display: flex; justify-content: space-between; padding: 0 12px 0 39px; }
.meta { margin-top: 15px; height: 26px; display: flex; align-items: center; font-size: 17px; line-height: 26px; }
.district { margin-left: 8px; width: 157px; letter-spacing: .18px; }
.org { margin-left: 8px; letter-spacing: .02px; }
.org a, .phone-text a, .orange { color: #e97c20; }
.pay { display: flex; flex-direction: column; align-items: flex-end; padding-top: 14px; }
.salary { margin-right: 37px; font-size: 24px; line-height: 30px; font-weight: 550; letter-spacing: .33px; color: #243152; white-space: nowrap; }
.apply { margin-top: 24px; width: 424px; height: 66px; border: 0; border-radius: 8px; background: #243152; color: #fff; display: flex; align-items: center; padding: 0 0 0 31px; font: 600 17px/26px Inter, sans-serif; letter-spacing: .25px; }
.apply span { margin-left: 11px; }
.facts { display: flex; padding-left: 37px; margin-top: 14px; height: 116px; }
.field { width: 243px; }
h2 { margin: 0; font-size: 19px; line-height: 28px; font-weight: 560; letter-spacing: .42px; color: #243152; white-space: nowrap; }
.tight { letter-spacing: .32px; }
.fact p { margin: 2px 0 0; font-size: 18px; line-height: 32px; letter-spacing: .02px; white-space: nowrap; }
.fact .orange { letter-spacing: -.1px; }
.reqs { height: 318px; padding: 33px 0 0 37px; }
.reqs h2 { margin-bottom: 2px; letter-spacing: .3px; }
.reqs p, .duties p { margin: 0; font-size: 18px; line-height: 45px; letter-spacing: .17px; white-space: nowrap; }
.duties { padding: 58px 0 0 37px; }
.duties h2 { margin-bottom: 1px; }
.duties p { letter-spacing: .24px; }

.org-card { box-sizing: border-box; width: 338px; height: 582px; border: 1px solid #e97c20; border-radius: 8px; color: #243152; font-size: 17px; }
.logo { font-family: Inter, sans-serif; }
.person { display: flex; margin: 36px 0 0 21px; }
.person svg { margin: 0 17px 0 0; }
.role { line-height: 26px; letter-spacing: -.18px; }
.name { font-size: 19px; line-height: 28px; font-weight: 700; letter-spacing: .63px; color: #e97c20; white-space: nowrap; }
.phone { display: flex; align-items: center; margin: 17px 0 0 21px; height: 50px; }
.phone-text { margin-left: 13px; line-height: 25px; letter-spacing: -.05px; }
.about { display: block; margin: 12px 0 0 60px; width: 215px; height: 56px; border: 0; border-radius: 8px; background: #e97b20; color: #fff; font: 400 23px/56px Inter, sans-serif; letter-spacing: -.05px; padding: 0; }

.scrollbar { width: 19px; height: 999px; background: #2c2c2c; display: flex; flex-direction: column; align-items: center; }
.scrollbar svg { margin-top: 8px; }
.thumb { width: 11px; height: 388px; border-radius: 5.500px; background: #9f9f9f; margin-top: 69px; }
.scrollbar .down { margin-top: auto; margin-bottom: 8px; }

.taskbar { height: 50px; flex: none; display: flex; background: linear-gradient(90deg, #232a2a 0, #2f2f28 60px, #41352a 420px, #382c23 560px, #35281f 900px, #33271f 1560px, #3c3328 1640px, #3b3428 1720px, #2e2c24 1820px, #26261f 1920px); }
.start { width: 60px; display: flex; align-items: center; justify-content: center; }
.search { box-sizing: border-box; width: 360px; background: #f2f2f2; border: 1px solid #bdbdbd; display: flex; align-items: center; padding-left: 14px; color: #2b2b2b; font-size: 18.500px; line-height: 30px; }
.search span { margin-left: 13px; letter-spacing: -.16px; }
.app { width: 62px; display: flex; align-items: center; justify-content: center; }
.app-active { box-sizing: border-box; background: #61564e; border-bottom: 3px solid #76b9ed; padding-top: 3px; }
.tray { margin-left: auto; display: flex; color: #fff; font-size: 14.500px; }
.tray > div { display: flex; align-items: center; justify-content: center; }
.w29 { width: 29px; }
.w30 { width: 30px; }
.w31 { width: 31px; }
.lang { width: 46px; letter-spacing: -.9px; }
.tray > .clock { width: 83px; flex-direction: column; font-size: 14px; line-height: 23px; letter-spacing: -.15px; }
.notif { width: 54px; position: relative; }
.count { position: absolute; left: 25px; top: 24px; box-sizing: border-box; width: 21px; height: 21px; border: 1px solid #8b8b88; border-radius: 50%; background: #33332f; font-size: 13px; font-weight: 700; line-height: 19px; text-align: center; }
.peek { width: 1px; background: #8d8d87; margin: 0 5px 0 8px; }
</style>
